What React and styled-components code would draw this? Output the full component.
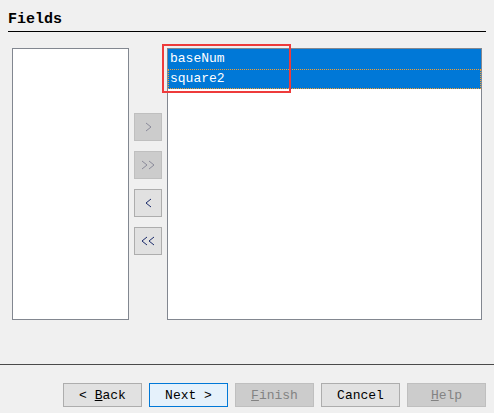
import React from 'react';
import styled, { createGlobalStyle } from 'styled-components';

const GlobalStyle = createGlobalStyle`
  html, body {
    margin: 0;
    padding: 0;
    background: #f0f0f0;
  }
`;

const mono = `"Liberation Mono", "DejaVu Sans Mono", monospace`;

const Page = styled.div`
  width: 494px;
  height: 413px;
  background: #f0f0f0;
  display: flex;
  flex-direction: column;
  font-family: ${mono};
  overflow: hidden;
`;

const Header = styled.div`
  margin: 0 8px;
  height: 31px;
  border-bottom: 1px solid #000;
  display: flex;
  align-items: flex-end;
`;

const Title = styled.h1`
  margin: 0 0 4px 0;
  font-size: 15px;
  line-height: 15px;
  font-weight: bold;
  color: #000;
`;

const Body = styled.div`
  margin-top: 16px;
  height: 272px;
  padding-left: 12px;
  display: flex;
  gap: 5px;
`;

const ListBox = styled.div`
  position: relative;
  box-sizing: border-box;
  width: ${(p) => p.$width}px;
  height: 100%;
  background: #fff;
  border: 1px solid #828790;
`;

const Row = styled.div`
  height: 20px;
  line-height: 20px;
  padding-left: 2px;
  font-size: 13px;
  background: ${(p) => (p.$selected ? '#0078d7' : 'transparent')};
  color: ${(p) => (p.$selected ? '#fff' : '#000')};
  outline: ${(p) => (p.$focused ? '1px dotted #f5a030' : 'none')};
  outline-offset: -1px;
`;

const Highlight = styled.div`
  position: absolute;
  left: -6px;
  top: -5px;
  width: 129px;
  height: 49px;
  box-sizing: border-box;
  border: 2px solid #ee3b3b;
  pointer-events: none;
`;

const MoveColumn = styled.div`
  padding-top: 65px;
  display: flex;
  flex-direction: column;
  gap: 10px;
`;

const MoveButton = styled.div`
  box-sizing: border-box;
  width: 28px;
  height: 28px;
  display: flex;
  align-items: center;
  justify-content: center;
  background: ${(p) => (p.$disabled ? '#cccccc' : '#e1e1e1')};
  border: 1px solid ${(p) => (p.$disabled ? '#bfbfbf' : '#adadad')};
`;

const Separator = styled.div`
  margin-top: 44px;
  height: 1px;
  background: #4a4a4a;
`;

const Footer = styled.div`
  margin-top: 18px;
  padding-right: 8px;
  display: flex;
  justify-content: flex-end;
  gap: 7px;
`;

const DialogButton = styled.div`
  box-sizing: border-box;
  width: 79px;
  height: 24px;
  display: flex;
  align-items: center;
  justify-content: center;
  font-size: 13px;
  background: ${(p) => (p.$disabled ? '#cccccc' : p.$default ? '#e5f1fb' : '#e1e1e1')};
  border: 1px solid ${(p) => (p.$disabled ? '#bfbfbf' : p.$default ? '#0078d7' : '#adadad')};
  color: ${(p) => (p.$disabled ? '#838383' : '#000')};
  white-space: pre;
`;

const Chevron = ({ dir, double, color }) => {
  const one = (x) =>
    dir === 'right'
      ? `${x},1 ${x + 5},5 ${x},9`
      : `${x + 5},1 ${x},5 ${x + 5},9`;
  return (
    <svg width={double ? 14 : 7} height="10" viewBox={`0 0 ${double ? 14 : 7} 10`}>
      <polyline points={one(1)} fill="none" stroke={color} strokeWidth="1" />
      {double && <polyline points={one(8)} fill="none" stroke={color} strokeWidth="1" />}
    </svg>
  );
};

export default function App() {
  return (
    <Page>
      <GlobalStyle />
      <Header>
        <Title>Fields</Title>
      </Header>
      <Body>
        <ListBox $width={117} />
        <MoveColumn>
          <MoveButton $disabled>
            <Chevron dir="right" color="#8a8a9a" />
          </MoveButton>
          <MoveButton $disabled>
            <Chevron dir="right" double color="#8a8a9a" />
          </MoveButton>
          <MoveButton>
            <Chevron dir="left" color="#1a2a6a" />
          </MoveButton>
          <MoveButton>
            <Chevron dir="left" double color="#1a2a6a" />
          </MoveButton>
        </MoveColumn>
        <ListBox $width={315}>
          <Row $selected>baseNum</Row>
          <Row $selected $focused>square2</Row>
          <Highlight />
        </ListBox>
      </Body>
      <Separator />
      <Footer>
        <DialogButton>{'< '}<u>B</u>ack</DialogButton>
        <DialogButton $default>{'Next >'}</DialogButton>
        <DialogButton $disabled><u>F</u>inish</DialogButton>
        <DialogButton>Cancel</DialogButton>
        <DialogButton $disabled><u>H</u>elp</DialogButton>
      </Footer>
    </Page>
  );
}
